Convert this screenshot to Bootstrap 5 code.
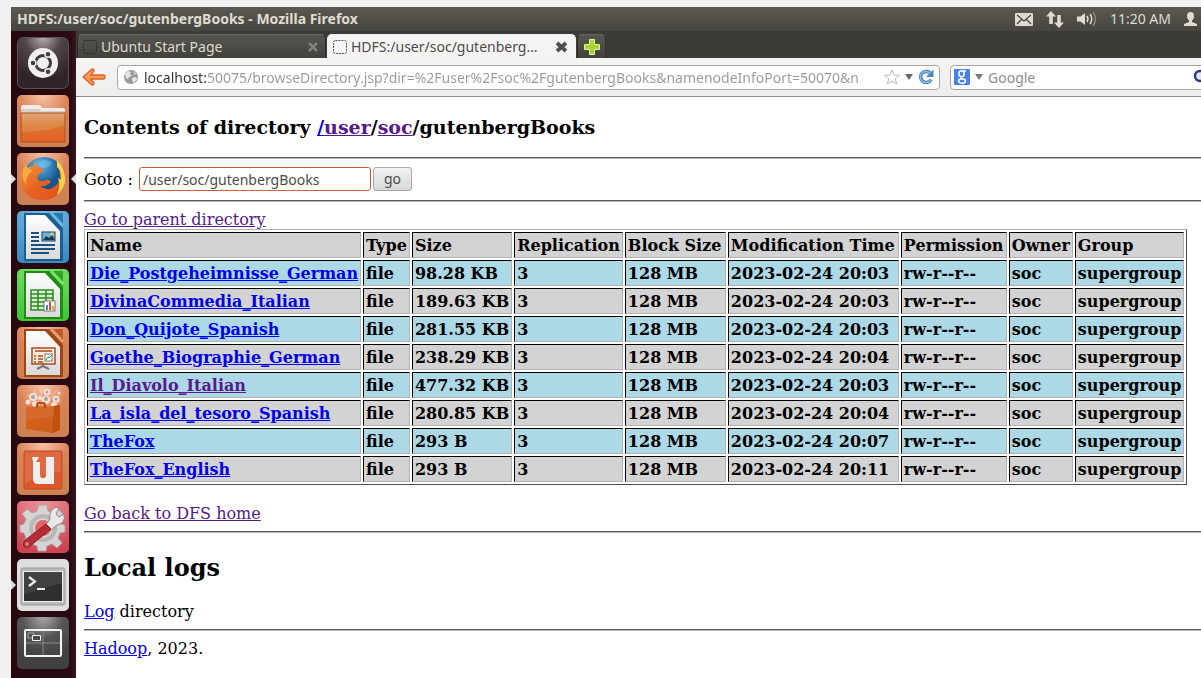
<!DOCTYPE html>
<html lang="en">
<head>
<meta charset="utf-8">
<meta name="viewport" content="width=device-width, initial-scale=1">
<title>HDFS:/user/soc/gutenbergBooks</title>
<link href="https://cdn.jsdelivr.net/npm/bootstrap@5.3.0/dist/css/bootstrap.min.css" rel="stylesheet">
<style>
  body { background: #f0f0f0; font-family: "Noto Sans", "Open Sans", sans-serif; font-size: 14px; line-height: 20px; padding: 7px 0 0 11px; overflow: hidden; }
  svg { display: block; flex: none; }
  .panel-top { height: 24px; background: linear-gradient(#5b5951, #45443e); color: #dfdbd2; padding: 0 4px 0 6px; }
  .panel-title { font-size: 14px; font-weight: 700; }
  .panel-tray { gap: 13px; }
  .launcher { width: 65px; background: linear-gradient(90deg, #26090f, #2a0a14 92%, #351724); padding: 6px 7px 9px 6px; gap: 6px; }
  .launch-btn { border: 0; padding: 0; background: none; width: 52px; height: 52px; }
  .running::before, .active-app::after { content: ""; position: absolute; top: 21px; border: 5px solid transparent; }
  .running::before { left: -6px; border-left-color: #ddd; border-right: 0; }
  .active-app::after { right: -7px; border-right-color: #ddd; border-left: 0; }
  .tab-strip { height: 27px; background: #3c3b37; padding: 3px 0 0 1px; gap: 1px; }
  .browser-tab { height: 24px; border-radius: 5px 5px 0 0; background: linear-gradient(#56554f, #42413c); border: 1px solid #2f2e2a; border-top-color: #66655e; border-bottom: 0; color: #dfdbd2; padding: 0 7px 0 5px; width: 249px; gap: 4px; }
  .browser-tab.current { background: #f5f4f2; border-color: #f5f4f2; color: #4c4c4c; }
  .browser-tab.tab-new { width: 29px; padding: 0; }
  .tab-close { border: 0; background: none; padding: 0; }
  .nav-tools { height: 39px; background: linear-gradient(#f6f4f2, #efedeb); border-bottom: 1px solid #8f8e8c; padding: 6px 0 6px 6px; }
  .field { height: 25px; background: #fff; border: 1px solid #a9a5a1; border-radius: 4px; padding: 0 5px; gap: 5px; }
  .field input { border: 0; padding: 1px 0 0; background: none; outline: 0; min-width: 0; flex: 1; height: 23px; }
  .field input::placeholder { color: #8d8d8d; opacity: 1; }
  .field .address-text { color: transparent; background: linear-gradient(90deg, #333 63px, #999 63px); -webkit-background-clip: text; background-clip: text; }
  .address-box { width: 826px; margin-left: 11px; }
  .search-box { margin-left: 10px; margin-right: -14px; padding-left: 3px; }
  .page-view { background: #fff; color: #000; font-family: "DejaVu Serif", serif; font-size: 16px; line-height: 19px; padding: 19px 0 0 8px; }
  .page-view a { color: #0000ee; }
  .page-view a.seen { color: #551a8b; }
  .page-view h1 { font-size: 19px; line-height: 22px; font-weight: 700; margin: 0 0 19px; }
  .page-view h2 { font-size: 24px; line-height: 28px; font-weight: 700; margin: 21px 0 20px; }
  .page-view hr { margin: 8px 0; border: 0; height: 2px; opacity: 1; background: linear-gradient(#5c5c5c 50%, #b8b8b8 50%); }
  .goto-form { height: 25px; gap: 2px; padding-bottom: 1px; }
  .goto-form label { margin-right: 4px; }
  .goto-form input { font: 14px/20px "Noto Sans", sans-serif; width: 232px; height: 24px; border: 1px solid #cf5d35; border-radius: 3px; padding: 0 3px; color: #4c4c4c; outline: 0; }
  .goto-form button { font: 14px/20px "Noto Sans", sans-serif; width: 39px; height: 24px; padding: 0; color: #4c4c4c; border: 1px solid #a8a8a8; border-radius: 3px; background: linear-gradient(#f2f2f2, #d8d8d8); }
  .listing { border: 1px solid; border-color: #b2b2b2 #4c4c4c #4c4c4c #b2b2b2; border-collapse: separate; border-spacing: 2px; font-weight: 700; line-height: 20px; margin-bottom: 19px; white-space: nowrap; }
  .listing th, .listing td { border: 1px solid; border-color: #000 #b2b2b2 #b2b2b2 #000; padding: 3px 2px 1px; background: #d3d3d3; }
  .listing tbody tr:nth-child(odd) td { background: #add8e6; }
  .col-block { width: 101px; }
  .col-time { width: 171px; }
  .col-perm { width: 106px; }
</style>
</head>
<body class="vh-100 d-flex flex-column">
<svg width="0" height="0" class="position-absolute" aria-hidden="true">
  <defs>
    <radialGradient id="gDash" cx=".5" cy="0" r=".8"><stop offset="0" stop-color="#b5adae"/><stop offset=".45" stop-color="#514548"/><stop offset="1" stop-color="#30262a"/></radialGradient>
    <radialGradient id="gOrange" cx=".5" cy="0" r="1"><stop offset="0" stop-color="#f9c2a5"/><stop offset=".5" stop-color="#d98258"/><stop offset="1" stop-color="#cd8153"/></radialGradient>
    <linearGradient id="gFolder" x2="0" y2="1"><stop offset="0" stop-color="#db9962"/><stop offset=".4" stop-color="#d9772e"/><stop offset="1" stop-color="#e45f28"/></linearGradient>
    <radialGradient id="gBlue" cx=".5" cy="0" r="1"><stop offset="0" stop-color="#79bde5"/><stop offset="1" stop-color="#3b8cc3"/></radialGradient>
    <radialGradient id="gGreen" cx=".5" cy="0" r="1"><stop offset="0" stop-color="#85e578"/><stop offset="1" stop-color="#43c735"/></radialGradient>
    <radialGradient id="gRed" cx=".5" cy="0" r="1"><stop offset="0" stop-color="#ef959b"/><stop offset="1" stop-color="#cd4350"/></radialGradient>
    <radialGradient id="gGrey" cx=".5" cy="0" r=".8"><stop offset="0" stop-color="#aaa"/><stop offset=".5" stop-color="#555"/><stop offset="1" stop-color="#414141"/></radialGradient>
    <linearGradient id="gPaper" x2="0" y2="1"><stop offset="0" stop-color="#fff"/><stop offset="1" stop-color="#d9d9d9"/></linearGradient>
    <radialGradient id="gGlobe" cx=".4" cy=".2"><stop offset="0" stop-color="#67bde7"/><stop offset="1" stop-color="#17538f"/></radialGradient>
    <linearGradient id="gFox" x2="1" y2="1"><stop offset="0" stop-color="#f3a03a"/><stop offset=".5" stop-color="#e76321"/><stop offset="1" stop-color="#e3501d"/></linearGradient>
  </defs>
</svg>

<header class="panel-top d-flex align-items-center justify-content-between">
  <div class="panel-title">HDFS:/user/soc/gutenbergBooks - Mozilla Firefox</div>
  <div class="panel-tray d-flex align-items-center">
    <svg width="18" height="13" viewBox="0 0 18 13"><rect width="18" height="13" rx="1" fill="#dfdbd2"/><path d="M2 2l7 6 7-6M2 11l5-5M16 11l-5-5" fill="none" stroke="#45443e" stroke-width="1.2"/></svg>
    <svg width="18" height="17" viewBox="0 0 18 17" fill="#dfdbd2"><path d="M5 0l5 5.500H6.800V13H3.200V5.500H0zM13 17l-5-5.500h3.200V4h3.600v7.500H18z"/></svg>
    <svg width="20" height="16" viewBox="0 0 20 16"><path d="M0 5.500h3.500L8 2v12l-4.500-3.500H0z" fill="#dfdbd2"/><path d="M10 5q2 3 0 6M13 3q3.500 5 0 10" fill="none" stroke="#dfdbd2" stroke-width="1.500"/><path d="M16 1q5 7 0 14" fill="none" stroke="#8b8880" stroke-width="1.500"/></svg>
    <span>11:20 AM</span>
    <svg width="13" height="14" viewBox="0 0 13 14"><path d="M6.500 0C9 0 10 1.500 10 4S8.800 8 8 8.500V10l5 2v2H0v-2l5-2V8.500C4.200 8 3 6.500 3 4s1-4 3.500-4z" fill="#dfdbd2"/></svg>
  </div>
</header>

<div class="d-flex flex-grow-1">
  <nav class="launcher d-flex flex-column flex-shrink-0" aria-label="Launcher">
    <button class="launch-btn" aria-label="Dash"><svg viewBox="0 0 52 52"><rect x=".5" y=".5" width="51" height="51" rx="6" fill="url(#gDash)" stroke="#5f5154"/><circle cx="26" cy="26" r="15" fill="#f1f0f0"/><circle cx="26" cy="26" r="7.500" fill="none" stroke="#44393c" stroke-width="3"/><g stroke="#f1f0f0" stroke-width="1.500" fill="#44393c"><circle cx="16" cy="26" r="3"/><circle cx="31" cy="17.300" r="3"/><circle cx="31" cy="34.700" r="3"/></g></svg></button>
    <button class="launch-btn" aria-label="Files"><svg viewBox="0 0 52 52"><rect width="52" height="52" rx="5" fill="url(#gOrange)"/><path d="M4 12q0-2 2-2h16q2 0 3 3h21q2 0 2 2v31H4z" fill="#f1e9e3"/><path d="M4 14h19v2h25v3H4z" fill="#d5d0ca"/><rect x="4" y="18" width="44" height="29" fill="url(#gFolder)" stroke="#b45320"/><path d="M5 19h42v11Q30 37 5 37z" fill="#fff" opacity=".13"/></svg></button>
    <button class="launch-btn position-relative running active-app" aria-label="Firefox"><svg viewBox="0 0 52 52"><rect width="52" height="52" rx="5" fill="url(#gOrange)"/><circle cx="27" cy="24" r="20" fill="url(#gGlobe)"/><path d="M21 10q7-6 14 0-3 5-10 5z" fill="#7dcbec" opacity=".45"/><path d="M44 12q6 10 2 21-5 14-20 14Q10 47 5 34 1 22 8 11l2 4q3-2 7-2-1-3 2-5 0 6 4 7 4 0 4 2l-6 5q-2 4 2 6 4 1 6-1 3-1 5 2-5 5-11 4 7 6 14 1 9-6 5-17l4 3z" fill="url(#gFox)"/><path d="M40 7q9 9 8 22-2 8-8 13 4-10 1-17l3 2q1-9-4-13z" fill="#f6d34a"/><path d="M8 12q-5 10 1 20-1-9 6-14z" fill="#f8b450" opacity=".8"/></svg></button>
    <button class="launch-btn" aria-label="LibreOffice Writer"><svg viewBox="0 0 52 52"><rect width="52" height="52" rx="5" fill="url(#gBlue)"/><path d="M7 2h28l11 16v32H7z" fill="#1a5d8e"/><path d="M31 2h15v15z" fill="#2877ad"/><path d="M34 2l12 13" stroke="#6db8e1" stroke-width="3"/><path d="M9 4h19l15 16v28H9z" fill="url(#gPaper)"/><path d="M14 22h8M14 26h8M14 30h8M14 34h24M14 38h24M14 42h18" stroke="#1b5279" stroke-width="1.800"/><rect x="25" y="21" width="13" height="9" fill="#73b3dd" stroke="#174467"/><path d="M26 29l3-4 3 2 3-3 3 5z" fill="#203744"/><circle cx="35" cy="23" r="1.500" fill="#f5ca42"/></svg></button>
    <button class="launch-btn" aria-label="LibreOffice Calc"><svg viewBox="0 0 52 52"><rect width="52" height="52" rx="5" fill="url(#gGreen)"/><path d="M7 2h28l11 16v32H7z" fill="#218b18"/><path d="M31 2h15v15z" fill="#34a52a"/><path d="M34 2l12 13" stroke="#7be46c" stroke-width="3"/><path d="M9 4h19l15 16v28H9z" fill="url(#gPaper)"/><rect x="14" y="21" width="22" height="20" fill="#d8f1cf"/><path d="M14 21h22v20H14zM14 25h22M14 29h22M14 33h22M14 37h22M21 21v20M29 21v20" fill="none" stroke="#2b8a22" stroke-width="1.500"/><rect x="27" y="32" width="11" height="10" fill="#fff" stroke="#777"/><path d="M29 36h2v5h-2z" fill="#3e88cf"/><path d="M32 33h2v8h-2z" fill="#da4f2e"/><path d="M35 37h2v4h-2z" fill="#e9a83c"/></svg></button>
    <button class="launch-btn" aria-label="LibreOffice Impress"><svg viewBox="0 0 52 52"><rect width="52" height="52" rx="5" fill="url(#gOrange)"/><path d="M7 2h28l11 16v32H7z" fill="#9c4617"/><path d="M31 2h15v15z" fill="#b75b29"/><path d="M34 2l12 13" stroke="#e79a70" stroke-width="3"/><path d="M9 4h19l15 16v28H9z" fill="url(#gPaper)"/><path d="M26 37v3M20 42l6-3 6 3" stroke="#777" stroke-width="2" fill="none"/><rect x="15" y="21" width="23" height="16" fill="#fae9dc" stroke="#a64e22" stroke-width="1.500"/><path d="M18 24h17M17 29h2M17 32h2M17 35h2M21 29h5M21 32h5M21 35h5" stroke="#a64e22" stroke-width="1.700"/><rect x="28" y="27" width="7" height="7" fill="#fff" stroke="#777"/><path d="M29 33l2-3 1 1 3-3" fill="none" stroke="#37963d"/></svg></button>
    <button class="launch-btn" aria-label="Ubuntu Software Centre"><svg viewBox="0 0 52 52"><rect width="52" height="52" rx="5" fill="url(#gOrange)"/><path d="M10 10l13 10M24 4l1 16M40 5L28 20M44 16l-12 6M17 5l6 15" stroke="#fff" opacity=".45"/><g fill="#f8e6dc" opacity=".9"><circle cx="16" cy="12" r="4"/><circle cx="30" cy="7" r="3.500"/><circle cx="39" cy="14" r="3.500"/><circle cx="23" cy="13" r="2"/><circle cx="42" cy="8" r="1.500"/><circle cx="11" cy="17" r="2.500"/><circle cx="18" cy="19" r="3"/><circle cx="29" cy="15" r="4"/><circle cx="37" cy="20" r="3"/></g><g fill="#a5a3aa"><circle cx="16" cy="12" r="2"/><circle cx="29" cy="14" r="2"/><circle cx="39" cy="14" r="1.500"/><circle cx="30" cy="7" r="1.500"/></g><path d="M9 22l28-1 6-1v25l-8 3-26-4z" fill="#d25e1b"/><path d="M37 21l6-1v25l-8 3z" fill="#c2500f"/><path d="M9 22l28-1v10L9 36z" fill="#fff" opacity=".08"/><path d="M20 23v-3q0-2 2-2h4q2 0 2 2v3" fill="none" stroke="#b84a12" stroke-width="2"/></svg></button>
    <button class="launch-btn" aria-label="Ubuntu One"><svg viewBox="0 0 52 52"><rect width="52" height="52" rx="5" fill="url(#gOrange)"/><rect x="7" y="8" width="38" height="38" rx="1" fill="#dc582b" stroke="#b7502c"/><path d="M8 9h36v20Q25 31 8 40z" fill="#fff" opacity=".1"/><path d="M15 14h7l-3 5h4v13q0 3 3 3t3-3V14h8v27H21q-5 0-5-5V19z" fill="#f1efed"/></svg></button>
    <button class="launch-btn" aria-label="System Settings"><svg viewBox="0 0 52 52"><rect width="52" height="52" rx="5" fill="url(#gRed)"/><path d="M22 4h8l1 6 5 2 5-4 5 5-4 5 2 5 4 1v7l-5 1-2 5 4 5-5 5-5-4-5 2-1 5h-8l-1-5-5-2-5 4-5-5 4-5-2-5-4-1v-7l4-1 2-5-4-5 5-5 5 4 5-2z" fill="#d6d4d2" stroke="#aaa5a5"/><circle cx="26" cy="27" r="12" fill="none" stroke="#bab7b6" stroke-width="4"/><circle cx="26" cy="27" r="8" fill="#e16469"/><path d="M28 25l5-7q-2-8 6-12l3 1-3 6 3 3 5-3q2 9-7 11l-7 6z" fill="#e9e8e7" stroke="#888"/><path d="M29 23l5 5-22 18q-3 2-5-1t0-5z" fill="#b62c34" stroke="#8e2028"/><circle cx="10" cy="43" r="2" fill="#df777b"/></svg></button>
    <button class="launch-btn position-relative running" aria-label="Terminal"><svg viewBox="0 0 52 52"><rect width="52" height="52" rx="5" fill="#dedede"/><rect x="4" y="9" width="44" height="37" rx="2" fill="#bcbcbc" stroke="#999"/><rect x="6.500" y="12.500" width="39" height="30" fill="#2e3030" stroke="#eee"/><path d="M7 13h38v11L7 35z" fill="#fff" opacity=".09"/><path d="M12 18l6 4.500-6 4.500" fill="none" stroke="#eee" stroke-width="2.200"/><path d="M20 30h8" stroke="#eee" stroke-width="2"/></svg></button>
    <button class="launch-btn" aria-label="Workspace Switcher"><svg viewBox="0 0 52 52"><rect width="52" height="52" rx="5" fill="url(#gGrey)"/><path d="M8 26h36M26 13v26" stroke="#888"/><rect x="8" y="13" width="36" height="26" rx="1" fill="none" stroke="#f4f4f4" stroke-width="2"/><path d="M11 16h6v5h-6z" fill="none" stroke="#aaa"/><path d="M15.500 18.500h8v5h-8z" fill="#484848" stroke="#f4f4f4"/></svg></button>
  </nav>

  <div class="flex-grow-1 d-flex flex-column overflow-hidden">
    <div class="tab-strip d-flex">
      <div class="browser-tab d-flex align-items-center">
        <svg width="14" height="14" viewBox="0 0 14 14"><rect x=".5" y=".5" width="13" height="13" rx="2" fill="none" stroke="#2c2b28" stroke-dasharray="2 1"/></svg>
        <span class="flex-grow-1 text-truncate">Ubuntu Start Page</span>
        <button class="tab-close" aria-label="Close tab"><svg width="10" height="10" viewBox="0 0 10 10"><path d="M1 1l8 8M9 1L1 9" stroke="#83817b" stroke-width="2.500"/></svg></button>
      </div>
      <div class="browser-tab current d-flex align-items-center">
        <svg width="14" height="14" viewBox="0 0 14 14"><rect x=".5" y=".5" width="13" height="13" rx="2" fill="none" stroke="#555" stroke-dasharray="2 1"/></svg>
        <span class="flex-grow-1 text-truncate">HDFS:/user/soc/gutenberg…</span>
        <button class="tab-close" aria-label="Close tab"><svg width="13" height="12" viewBox="0 0 13 12"><path d="M2 2l9 8M11 2L2 10" stroke="#4f4f4f" stroke-width="3.800"/></svg></button>
      </div>
      <button class="browser-tab tab-new d-flex align-items-center justify-content-center" aria-label="New tab"><svg width="16" height="16" viewBox="0 0 16 16"><path d="M5.500.5h5v5h5v5h-5v5h-5v-5h-5v-5h5z" fill="#a5d535" stroke="#e3f4a6"/></svg></button>
    </div>

    <div class="nav-tools d-flex align-items-center">
      <button class="tab-close" aria-label="Back"><svg width="24" height="20" viewBox="0 0 24 20"><path d="M10 2q2 0 2 2L9 8h12q2 0 2 2t-2 2H9l3 4q0 2-2 2L1 10z" fill="#f29a55" stroke="#d9632b" stroke-width="1.300"/></svg></button>
      <div class="address-box field d-flex align-items-center">
        <svg width="16" height="16" viewBox="0 0 16 16"><circle cx="8" cy="8" r="7" fill="#999"/><path d="M2 5l3-3 3 1-1 2 2 2-3 1-1 2-2-1zM9 9l4-1 1 2-3 4-2-2zM10 3l3 1-1 2z" fill="#e5e5e5"/></svg>
        <input class="address-text" type="text" aria-label="Address" value="localhost:50075/browseDirectory.jsp?dir=%2Fuser%2Fsoc%2FgutenbergBooks&amp;namenodeInfoPort=50070&amp;n">
        <svg width="16" height="16" viewBox="0 0 16 16"><path d="M8 1l2 5 5.500.3-4.300 3.500L12.700 15 8 12l-4.700 3 1.500-5.200L.5 6.300 6 6z" fill="#fff" stroke="#bbb"/></svg>
        <svg width="8" height="6" viewBox="0 0 8 6"><path d="M0 0h8L4 6z" fill="#666"/></svg>
        <svg width="16" height="16" viewBox="0 0 16 16"><path d="M13 10.500A5.500 5.500 0 1 1 12 4" fill="none" stroke="#4b85bb" stroke-width="3.600"/><path d="M15.500.5v7.500H8z" fill="#4b85bb"/><path d="M12.500 11A5.500 5.500 0 1 1 12 4.500" fill="none" stroke="#8bbbe2" stroke-width="1.500"/></svg>
      </div>
      <div class="search-box field d-flex align-items-center flex-grow-1">
        <svg width="16" height="16" viewBox="0 0 16 16"><rect width="16" height="16" rx="1" fill="#4a80ea"/><g fill="none" stroke="#fff" stroke-width="1.600"><ellipse cx="7.500" cy="4.800" rx="2.600" ry="3"/><path d="M9 2h3M7 8q-1 1 1 2"/><ellipse cx="8" cy="12" rx="3.400" ry="2.300"/></g></svg>
        <svg width="8" height="6" viewBox="0 0 8 6"><path d="M0 0h8L4 6z" fill="#777"/></svg>
        <input type="text" aria-label="Search" placeholder="Google">
        <svg width="16" height="16" viewBox="0 0 16 16"><circle cx="7" cy="7" r="5" fill="#dce8f8" stroke="#2c397c" stroke-width="2.500"/><path d="M11 11l4 4" stroke="#2c397c" stroke-width="3"/></svg>
      </div>
    </div>

    <main class="page-view flex-grow-1">
      <h1>Contents of directory <a href="#">/</a><a href="#" class="seen">user</a>/<a href="#" class="seen">soc</a>/gutenbergBooks</h1>
      <hr>
      <form class="goto-form d-flex align-items-center">
        <label for="goto">Goto :</label>
        <input id="goto" type="text" value="/user/soc/gutenbergBooks">
        <button type="button">go</button>
      </form>
      <hr>
      <a href="#" class="seen d-block">Go to parent directory</a>
      <table class="listing">
        <colgroup><col><col><col><col><col class="col-block"><col class="col-time"><col class="col-perm"><col><col></colgroup>
        <thead><tr><th>Name</th><th>Type</th><th>Size</th><th>Replication</th><th>Block Size</th><th>Modification Time</th><th>Permission</th><th>Owner</th><th>Group</th></tr></thead>
        <tbody>
          <tr><td><a href="#">Die_Postgeheimnisse_German</a></td><td>file</td><td>98.28 KB</td><td>3</td><td>128 MB</td><td>2023-02-24 20:03</td><td>rw-r--r--</td><td>soc</td><td>supergroup</td></tr>
          <tr><td><a href="#">DivinaCommedia_Italian</a></td><td>file</td><td>189.63 KB</td><td>3</td><td>128 MB</td><td>2023-02-24 20:03</td><td>rw-r--r--</td><td>soc</td><td>supergroup</td></tr>
          <tr><td><a href="#">Don_Quijote_Spanish</a></td><td>file</td><td>281.55 KB</td><td>3</td><td>128 MB</td><td>2023-02-24 20:03</td><td>rw-r--r--</td><td>soc</td><td>supergroup</td></tr>
          <tr><td><a href="#">Goethe_Biographie_German</a></td><td>file</td><td>238.29 KB</td><td>3</td><td>128 MB</td><td>2023-02-24 20:04</td><td>rw-r--r--</td><td>soc</td><td>supergroup</td></tr>
          <tr><td><a href="#" class="seen">Il_Diavolo_Italian</a></td><td>file</td><td>477.32 KB</td><td>3</td><td>128 MB</td><td>2023-02-24 20:03</td><td>rw-r--r--</td><td>soc</td><td>supergroup</td></tr>
          <tr><td><a href="#">La_isla_del_tesoro_Spanish</a></td><td>file</td><td>280.85 KB</td><td>3</td><td>128 MB</td><td>2023-02-24 20:04</td><td>rw-r--r--</td><td>soc</td><td>supergroup</td></tr>
          <tr><td><a href="#">TheFox</a></td><td>file</td><td>293 B</td><td>3</td><td>128 MB</td><td>2023-02-24 20:07</td><td>rw-r--r--</td><td>soc</td><td>supergroup</td></tr>
          <tr><td><a href="#">TheFox_English</a></td><td>file</td><td>293 B</td><td>3</td><td>128 MB</td><td>2023-02-24 20:11</td><td>rw-r--r--</td><td>soc</td><td>supergroup</td></tr>
        </tbody>
      </table>
      <a href="#" class="seen d-block">Go back to DFS home</a>
      <hr>
      <h2>Local logs</h2>
      <div><a href="#">Log</a> directory</div>
      <hr>
      <footer><a href="#">Hadoop</a>, 2023.</footer>
    </main>
  </div>
</div>
<script src="https://cdn.jsdelivr.net/npm/bootstrap@5.3.0/dist/js/bootstrap.bundle.min.js"></script>
</body>
</html>
